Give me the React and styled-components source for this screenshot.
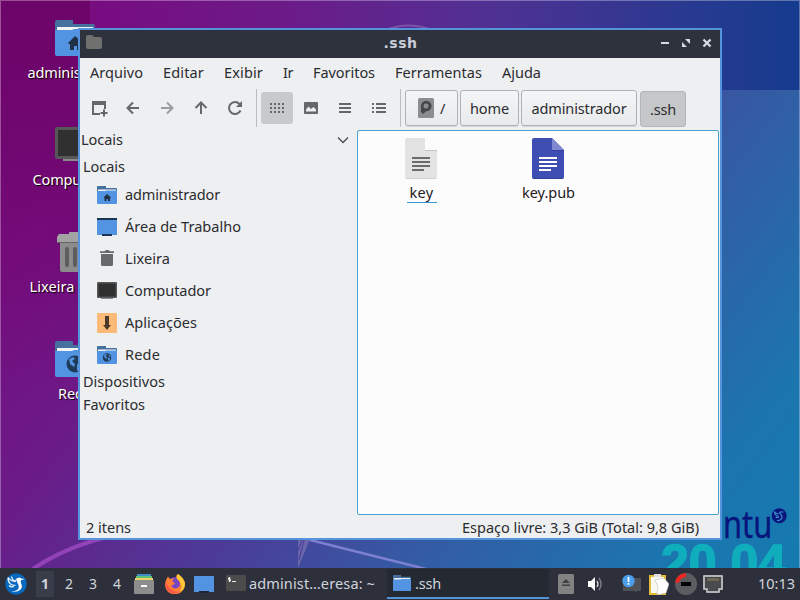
import React, { useLayoutEffect, useRef } from "react";
import styled, { createGlobalStyle, css } from "styled-components";

const Global = createGlobalStyle`
  * { box-sizing: border-box; }
  body { margin: 0; overflow: hidden; }
`;

const Screen = styled.div`
  position: relative;
  width: 800px;
  height: 600px;
  overflow: hidden;
  display: flex;
  flex-direction: column;
  justify-content: flex-end;
  font-family: "Noto Sans", "Open Sans", sans-serif;
  font-size: 14.5px;
  line-height: 20px;
  color: #2b2c2f;
  background: linear-gradient(127deg, #740874 0%, #740f80 17%, #6b1b88 31%, #4b3c98 51%, #355aa3 66%, #1c75ae 86%, #147bb0 100%);
`;

const Wallpaper = styled.svg`
  position: absolute;
  inset: 0;
`;

const Brand = styled.div`
  position: absolute;
  left: 723px;
  top: 498px;
  font-size: 39px;
  line-height: 50px;
  color: #07157c;
  -webkit-text-stroke: 0.4px #07157c;
  transform: scaleX(0.79);
  transform-origin: 0 0;
`;

const Version = styled.div`
  position: absolute;
  left: 661px;
  top: 535px;
  font: bold 50px/56px "Liberation Sans", sans-serif;
  color: #10aebd;
  -webkit-text-stroke: 1.5px #10aebd;
`;

const LabelBox = styled.span`
  display: block;
  flex: none;
  width: ${(p) => p.$w}px;
  white-space: pre;
`;

/* A text run tracked so that it fills the given width. */
function Label({ w, children }) {
  const ref = useRef(null);
  useLayoutEffect(() => {
    const el = ref.current;
    el.style.letterSpacing = "0px";
    const natural = el.getBoundingClientRect().width;
    el.style.letterSpacing = `${(w - natural) / el.textContent.length}px`;
  }, [w, children]);
  return (
    <LabelBox $w={w}>
      <span ref={ref}>{children}</span>
    </LabelBox>
  );
}

const Icon = styled.svg`
  display: block;
  flex: none;
  width: ${(p) => p.$w || 20}px;
  height: ${(p) => p.$h || p.$w || 20}px;
`;

/* Desktop */
const DesktopIcons = styled.div`
  position: absolute;
  left: 25px;
  top: 18px;
  width: 100px;
  display: grid;
  grid-auto-rows: 107px;
`;
const DesktopItem = styled.div`
  display: flex;
  flex-direction: column;
  align-items: center;
  gap: 4px;
  color: #fff;
  text-shadow: 1px 1px 1px #000;
`;
const DesktopName = styled.div`
  width: ${(p) => p.$w}px;
`;

/* Window */
const Window = styled.section`
  position: absolute;
  left: 78px;
  top: 28px;
  width: 644px;
  height: 512px;
  border: 2px solid #5593dd;
  background: #eeeff1;
  display: flex;
  flex-direction: column;
`;
const TitleBar = styled.header`
  height: 28px;
  background: #2e323d;
  display: grid;
  grid-template-columns: 80px 1fr 80px;
  align-items: center;
  padding: 0 7px 2px 5px;
`;
const Title = styled.h1`
  margin: 0;
  padding-left: 3px;
  display: flex;
  justify-content: center;
  font: bold 14px/20px "DejaVu Sans", sans-serif;
  color: #c8cdd8;
`;
const WindowButtons = styled.div`
  display: flex;
  justify-content: flex-end;
  gap: 9px;
`;
const MenuBar = styled.nav`
  height: 30px;
  display: flex;
  align-items: center;
  gap: 20px;
  padding: 0 0 2px 10px;
`;
const ToolBar = styled.div`
  height: 42px;
  display: flex;
  align-items: flex-start;
  padding: 1px 0 0 3px;
`;
const ToolGroup = styled.div`
  display: flex;
  gap: 2px;
  padding-top: 3px;
`;
const ToolButton = styled.button`
  width: 32px;
  height: 32px;
  padding: 0;
  border: 0;
  border-radius: 3px;
  display: grid;
  place-items: center;
  color: #66676b;
  background: ${(p) => (p.$active ? "#c8c9cb" : "transparent")};
  opacity: ${(p) => (p.$dim ? 0.6 : 1)};
`;
const Separator = styled.div`
  width: 1px;
  height: 38px;
  background: #bcbdc0;
  margin: 0 4px 0 5px;
`;
const PathButton = styled.button`
  height: 36px;
  width: ${(p) => p.$w}px;
  margin: 1px 2px 0 0;
  padding: 0;
  font: inherit;
  color: inherit;
  border: 1px solid #b0b1b4;
  border-radius: 3px;
  display: flex;
  align-items: center;
  justify-content: center;
  gap: 6px;
  background: linear-gradient(#f4f5f6, #e9eaec);
  box-shadow: 0 1px 0 #d4d5d7;
  ${(p) =>
    p.$active &&
    css`
      margin: 2px 0 0 1px;
      background: #c6c7c9;
      border-color: #b4b5b8;
      box-shadow: none;
    `}
`;
const Main = styled.div`
  height: 385px;
  display: grid;
  grid-template-columns: 277px 362px;
`;
const SidePane = styled.aside`
  display: flex;
  flex-direction: column;
`;
const PaneHeader = styled.div`
  height: 21px;
  display: flex;
  align-items: center;
  justify-content: space-between;
  padding: 0 8px 2px 1px;
  ${LabelBox} {
    margin-bottom: 1px;
  }
`;
const TreeHeading = styled.div`
  height: ${(p) => (p.$first ? 28 : 23)}px;
  display: flex;
  align-items: center;
  padding: ${(p) => (p.$first ? 2 : 0)}px 0 ${(p) => (p.$first ? 0 : 3)}px 3px;
`;
const Place = styled.div`
  height: 32px;
  display: flex;
  align-items: center;
  gap: 8px;
  padding-left: 17px;
  ${LabelBox} {
    margin-bottom: 2px;
  }
`;
const FileView = styled.div`
  border: 1px solid #4aa3cf;
  border-radius: 2px;
  background: #fcfcfc;
  display: flex;
  padding-top: 7px;
`;
const File = styled.div`
  width: 127px;
  padding-right: 2px;
  display: flex;
  flex-direction: column;
  align-items: center;
  gap: 3px;
  color: #1f2022;
`;
const FileName = styled.div`
  margin-left: 2px;
  padding: 0 3px;
  height: 21px;
  border-bottom: 1px solid ${(p) => (p.$current ? "#359bcf" : "transparent")};
`;
const StatusBar = styled.footer`
  height: 22px;
  display: flex;
  align-items: center;
  justify-content: space-between;
  padding: 1px 21px 0 6px;
`;

/* Panel */
const Panel = styled.footer`
  position: relative;
  height: 32px;
  background: #2d303b;
  color: #d0d4dd;
  display: flex;
  align-items: center;
  padding: 0 5px;
`;
const Workspaces = styled.div`
  display: flex;
  gap: 6px;
  margin: 0 8px 0 9px;
`;
const Workspace = styled.div`
  width: 18px;
  height: 26px;
  display: grid;
  place-items: center;
  font-size: 14px;
  font-weight: ${(p) => (p.$active ? 700 : 400)};
  background: ${(p) => (p.$active ? "#393d4a" : "transparent")};
`;
const Launchers = styled.div`
  display: grid;
  grid-template-columns: 31px 29px 20px;
  margin-right: 12px;
`;
const Task = styled.div`
  width: ${(p) => p.$w}px;
  height: 30px;
  display: flex;
  align-items: center;
  gap: ${(p) => (p.$active ? 4 : 3)}px;
  padding: 0 0 0 ${(p) => (p.$active ? 6 : 0)}px;
  background: ${(p) => (p.$active ? "#252932" : "transparent")};
  border-bottom: 2px solid ${(p) => (p.$active ? "#5593dd" : "transparent")};
`;
const Tray = styled.div`
  flex: 1;
  display: grid;
  grid-template-columns: 28px 36px 27px 26px 28px 1fr;
  align-items: center;
  padding-left: 9px;
`;
const Clock = styled.div`
  padding-bottom: 2px;
`;

function FolderIcon({ size, kind }) {
  return (
    <Icon $w={size} viewBox="0 0 40 40">
      <path d="M0 4a2 2 0 0 1 2-2h16v4h20a2 2 0 0 1 2 2v10H0z" fill="#46719f" />
      <path d="M2 9h36v5H2z" fill="#f4f4f2" />
      <path d="M0 12h17l2-1h21v25a2 2 0 0 1-2 2H2a2 2 0 0 1-2-2z" fill="#5294e2" />
      {kind === "home" && <path d="m20 18 8 7-1 1h-1v6h-4v-4h-3v4h-4v-6h-1l-1-1z" fill="#1f3245" />}
      {kind === "net" && (
        <g>
          <circle cx="20" cy="25" r="8.5" fill="#1f3b57" />
          <path d="m14 20 4-2 2 2-3 2 3 3-1 3-4-3zM23 19l4 4-2 1-2-2zM22 25l4 1-1 4-3 2z" fill="#5294e2" />
        </g>
      )}
    </Icon>
  );
}
function MonitorIcon({ size }) {
  return (
    <Icon $w={size} viewBox="0 0 40 40">
      <path d="M8 32h24v4H8z" fill="#8b8b8b" />
      <rect y="2" width="40" height="32" rx="2" fill="#555759" />
      <rect x="3" y="5" width="34" height="26" fill="#303030" />
    </Icon>
  );
}
function BigTrash() {
  return (
    <Icon $w={40} viewBox="0 0 40 40">
      <path d="M5 9h30v29a2 2 0 0 1-2 2H7a2 2 0 0 1-2-2z" fill="#8c8c8c" />
      <path d="M14 0h12v2h10l2 3v5H2V5l2-3h10z" fill="#a3a3a3" />
      <path d="M2 10h36v1H2z" fill="#666" />
      <g fill="#5d5d5d">
        <rect x="10" y="15" width="4" height="20" rx="2" />
        <rect x="18" y="15" width="4" height="20" rx="2" />
        <rect x="26" y="15" width="4" height="20" rx="2" />
      </g>
    </Icon>
  );
}
function SmallTrash() {
  return (
    <Icon viewBox="0 0 20 20">
      <path d="M3 2.200h4.500L9 1h2.500L13 2.200h4V4H3zM4 5h12v10.500a1.500 1.500 0 0 1-1.500 1.500h-9A1.500 1.500 0 0 1 4 15.500z" fill="#68696c" />
    </Icon>
  );
}
function DesktopIcon() {
  return (
    <Icon viewBox="0 0 20 20">
      <path d="M0 2h20v16H0z" fill="#5294e2" />
      <path d="M0 1h20v2H0zM5 17h10v2H5z" fill="#1c3554" />
    </Icon>
  );
}
function AppsIcon() {
  return (
    <Icon viewBox="0 0 20 20">
      <rect width="20" height="20" rx="1" fill="#fbba78" />
      <path d="M8 3h4v9h2l-4 5-4-5h2z" fill="#4b3a2b" />
    </Icon>
  );
}
function FileIcon({ plain }) {
  return (
    <Icon $w={32} $h={41} viewBox="0 0 32 41">
      <path d="M2 0h18l12 12v27a2 2 0 0 1-2 2H2a2 2 0 0 1-2-2V2a2 2 0 0 1 2-2z" fill={plain ? "#fbfbfb" : "#3f4eb3"} />
      {plain ? (
        <path d="M2 0h18v12h12v27a2 2 0 0 1-2 2H2a2 2 0 0 1-2-2V2a2 2 0 0 1 2-2z" fill="#e3e3e3" />
      ) : (
        <path d="M20 0l12 12H20z" fill="#8088cf" />
      )}
      <path d="M20 12h12v1H20z" fill={plain ? "#c4c4c4" : "#3540a0"} />
      <path d="M0 40h32l-2 1H2z" fill={plain ? "#cfcfcf" : "#35419b"} />
      <path d="M7 19h18v2H7zM7 23h18v2H7zM7 27h18v2H7zM7 31h12v2H7z" fill={plain ? "#6b6b6b" : "#fff"} />
    </Icon>
  );
}
const stroke = { fill: "none", stroke: "currentColor", strokeWidth: 2 };

function NavIcon({ name }) {
  const art = {
    newTab: <path d="M3 3h14v8h-2V7H5v8h6v2H3zM14 11.500h2V14h2.500v2H16v2.500h-2V16h-2.500v-2H14z" fill="currentColor" />,
    back: <path d="M16 10H5M10 4.500 4.500 10l5.500 5.500" {...stroke} />,
    forward: <path d="M4 10h11M10 4.500l5.500 5.500-5.500 5.500" {...stroke} />,
    up: <path d="M10 16V5M4.500 10 10 4.500l5.500 5.500" {...stroke} />,
    reload: (
      <g>
        <path d="M15.500 12.500A6 6 0 1 1 14.500 6" {...stroke} />
        <path d="M17 3v6h-6z" fill="currentColor" />
      </g>
    ),
    icons: <path d="M3 6h15M3 10h15M3 14h15" fill="none" stroke="currentColor" strokeWidth="2" strokeDasharray="2 2" />,
    thumbs: <path fillRule="evenodd" d="M4 4h12a1 1 0 0 1 1 1v10a1 1 0 0 1-1 1H4a1 1 0 0 1-1-1V5a1 1 0 0 1 1-1zM5 13.500h10v-2L12.500 9 10 11 7.500 8.500 5 11.500z" fill="currentColor" />,
    compact: <path d="M4 6h12M4 10h12M4 14h12" {...stroke} />,
    detail: <path d="M3 6h2M7 6h10M3 10h2M7 10h10M3 14h2M7 14h10" {...stroke} />,
  };
  return <Icon viewBox="0 0 20 20">{art[name]}</Icon>;
}

function DiskIcon() {
  return (
    <Icon $w={16} $h={20} viewBox="0 0 16 20">
      <rect width="16" height="20" rx="1.500" fill="#8c8d8f" />
      <path d="M3 14V8a5.300 5.300 0 1 1 5.300 5.300L5 16z" fill="#45474a" />
      <circle cx="8" cy="8" r="2.500" fill="#8c8d8f" />
    </Icon>
  );
}

function BirdLogo() {
  return (
    <g>
      <circle cx="11" cy="11" r="10.700" fill="#0868bd" />
      <path d="M3 4.500q0 4.500 2.500 6.500 3 2 5 1M3 4.500q2.500 3.500 6.500 4M6.500 3.500q.5 3.500 3.500 5M10 9q1.500-4.500 6-3.500M4 12.500q2 2 5 1" fill="none" stroke="#eef6fc" strokeWidth="1.200" />
      <path d="M12 5.500q2-1.500 4 0l4 .6-3.500 1q-1.500.9-.5 2.900 2 4-.5 6.500-3 3-9 2 5.500-.5 7-3 1-2.500-.8-5-1.700-3-.7-5z" fill="#fff" />
    </g>
  );
}
function CabinetIcon() {
  return (
    <Icon viewBox="0 0 20 20">
      <path d="M3 0h14v2H3z" fill="#3d8ec9" />
      <path d="M2 2h16v2H2z" fill="#65bf72" />
      <path d="M1 4h18v3H1z" fill="#eed267" />
      <rect y="6" width="20" height="14" rx="1" fill="#8d8d8d" />
      <path d="M7 11h6v2H7z" fill="#fff" />
    </Icon>
  );
}
function FirefoxIcon() {
  return (
    <Icon viewBox="0 0 20 20">
      <circle cx="10" cy="10.500" r="7.500" fill="#7548c0" />
      <path d="M1.500 5 3 2.500 5 5l4-.5-2 3 3 1.500q-2 3-4 2 1.500 4 5 3.500 4-1 4-5Q15 7 12 5q-2-3 1-5 6 4 7 9 0 9-8 11Q4 21 1 15q-2-5 .5-10z" fill="#ff7f37" />
      <path d="M12 4.500Q11 2 13 0q7 5 7 11-1 6-6 7 4-4 2-8-1-3-4-5.500z" fill="#ffca35" />
      <path d="M1 8Q-1 14 4 18q6 4 12-1-5 2-9-1T1 8z" fill="#fa5a48" />
    </Icon>
  );
}
function ShowDesktopIcon() {
  return (
    <Icon viewBox="0 0 20 20">
      <path d="M0 2h20v16h-5v-1H5v1H0z" fill="#5294e2" />
      <path d="M5 17h10v2H5z" fill="#1c2638" />
    </Icon>
  );
}
function TerminalIcon() {
  return (
    <Icon viewBox="0 0 20 20">
      <rect y="2" width="20" height="16" rx="1" fill="#4b4b4b" />
      <path d="M4.500 5H2.500v1.500h2V8h-2M3.500 4v5M6 8.500h4" fill="none" stroke="#e9e9e9" />
    </Icon>
  );
}
function EjectIcon() {
  return (
    <Icon $w={16} $h={20} viewBox="0 0 16 20">
      <rect width="16" height="20" rx="1.500" fill="#828282" />
      <path d="m8 5 4 4H4zM4 10.500h8V12H4z" fill="#414141" />
    </Icon>
  );
}
function VolumeIcon() {
  return (
    <Icon $w={18} $h={18} viewBox="0 0 18 18">
      <path d="M2 6h3l4-4v14l-4-4H2z" fill="#fff" />
      <path d="M11 6q2 3 0 6" fill="none" stroke="#e0e1e4" strokeWidth="1.300" />
      <path d="M13 3q4 6 0 12" fill="none" stroke="#797c83" strokeWidth="1.500" />
    </Icon>
  );
}
function NoticeIcon() {
  return (
    <Icon $w={20} viewBox="0 0 20 20">
      <path d="M1 4h18v13h-4l-2 2v-2H1z" fill="#505157" />
      <circle cx="6.500" cy="7" r="6.200" fill="#4a9fea" />
      <path d="M5.600 3h1.800v5H5.600zM5.600 9h1.800v1.800H5.600z" fill="#fff" />
    </Icon>
  );
}
function ClipboardIcon() {
  return (
    <Icon $w={20} $h={21} viewBox="0 0 20 21">
      <rect y="1" width="17" height="20" fill="#e3bb36" />
      <path d="M2 3h13v16H2z" fill="#f8f8f1" />
      <path d="M5 0h7v3H5z" fill="#dedede" />
      <path d="m6 6 9-2 5 6-3 9-9 2 1-8z" fill="#fff" stroke="#bdbcac" strokeWidth=".6" />
    </Icon>
  );
}
function GaugeIcon() {
  return (
    <Icon $w={22} viewBox="0 0 22 22">
      <circle cx="11" cy="11" r="11" fill="#5c5d61" />
      <path d="M0 10A11 11 0 0 1 11 0v6l-5 3z" fill="#e9261f" />
      <circle cx="11" cy="11" r="7" fill="#595a5e" />
      <path d="M6 9h10v4H6z" fill="#000" />
    </Icon>
  );
}
function EthernetIcon() {
  return (
    <Icon $w={20} $h={18} viewBox="0 0 20 18">
      <path d="M1 1h18v13h-3v3H4v-3H1z" fill="#45464a" stroke="#b4b4b4" strokeWidth="2" strokeLinejoin="round" />
      <path d="M3 4h14v8h-3v3H6v-3H3z" fill="#4a4b4d" />
      <path d="M5 3v3M7 3v3M9 3v3M11 3v3M13 3v3M15 3v3" stroke="#a69663" strokeWidth=".8" />
    </Icon>
  );
}

const desktop = [
  { icon: <FolderIcon size={40} kind="home" />, name: "administrador", w: 95 },
  { icon: <MonitorIcon size={40} />, name: "Computador", w: 85 },
  { icon: <BigTrash />, name: "Lixeira", w: 45, box: 91 },
  { icon: <FolderIcon size={40} kind="net" />, name: "Rede", w: 34 },
];
const menus = [["Arquivo", 53], ["Editar", 41], ["Exibir", 39], ["Ir", 10], ["Favoritos", 62], ["Ferramentas", 87], ["Ajuda", 39]];
const places = [
  [<FolderIcon size={20} kind="home" />, "administrador", 95],
  [<DesktopIcon />, "Área de Trabalho", 116],
  [<SmallTrash />, "Lixeira", 45],
  [<MonitorIcon size={20} />, "Computador", 86],
  [<AppsIcon />, "Aplicações", 72],
  [<FolderIcon size={20} kind="net" />, "Rede", 35],
];

export default function App() {
  return (
    <Screen>
      <Global />
      <Wallpaper width="800" height="600" viewBox="0 0 800 600">
        <defs>
          <linearGradient id="top">
            <stop offset="0" stopColor="#780c80" />
            <stop offset=".28" stopColor="#6c1b89" />
            <stop offset=".55" stopColor="#513093" />
            <stop offset=".86" stopColor="#263a90" />
            <stop offset="1" stopColor="#153b8e" />
          </linearGradient>
          <linearGradient id="corner" x2="0" y2="1">
            <stop offset="0" stopColor="#6d0569" />
            <stop offset=".3" stopColor="#70066f" />
            <stop offset="1" stopColor="#740a78" stopOpacity="0" />
          </linearGradient>
        </defs>
        <path d="M90 0h710v90H90z" fill="url(#top)" />
        <path d="M0 0h90v400H0z" fill="url(#corner)" />
        <path d="M33 569q29-20 70-31" fill="none" stroke="#a84fc9" strokeWidth="4" opacity=".7" />
        <path d="M298 539v29l12-29z" fill="#8579b4" opacity=".6" />
        <path d="m299 560 5-20M298 551l4-11" stroke="#4a3b98" />
        <path d="m310 540 120 30" stroke="#7d7fd0" strokeWidth="2.500" />
        <path d="M386 30q22-9 46 0" fill="none" stroke="#8b68b5" strokeWidth="2" opacity=".7" />
        <path d="M0 .5h800M.5 0v568M799.500 0v568" stroke="#fff" opacity=".3" />
        <g transform="translate(771.500 508) scale(.7)">
          <circle cx="11" cy="11" r="10.700" fill="#07157c" />
          <path d="M4 5q1 6 6 7M4 5q3 4 6 3M6 13q3 1 5 0M11 8q2-4 6-2M12 8q5 4 2 8-2 2-6 2" fill="none" stroke="#3f93cf" strokeWidth="1.600" />
        </g>
      </Wallpaper>
      <Brand>ntu</Brand>
      <Version>20.04</Version>

      <DesktopIcons>
        {desktop.map(({ icon, name, w, box }) => (
          <DesktopItem key={name}>
            {icon}
            <DesktopName $w={box || w}><Label w={w}>{name}</Label></DesktopName>
          </DesktopItem>
        ))}
      </DesktopIcons>

      <Window>
        <TitleBar>
          <Icon $w={18} viewBox="0 0 18 18">
            <path d="M1 3a2 2 0 0 1 2-2h4l2 2h6a2 2 0 0 1 2 2v8a2 2 0 0 1-2 2H3a2 2 0 0 1-2-2z" fill="#70706f" />
          </Icon>
          <Title><Label w={34}>.ssh</Label></Title>
          <WindowButtons>
            <Icon $w={12} viewBox="0 0 12 12"><path d="M2 6h8" stroke="#d5dae6" strokeWidth="2" /></Icon>
            <Icon $w={12} viewBox="0 0 12 12"><path d="M5 2h5v5zM2 5v5h5z" fill="#d5dae6" /></Icon>
            <Icon $w={12} viewBox="0 0 12 12"><path d="m2.500 2.500 7 7m0-7-7 7" stroke="#d5dae6" strokeWidth="2.300" /></Icon>
          </WindowButtons>
        </TitleBar>
        <MenuBar>
          {menus.map(([name, w]) => <Label key={name} w={w}>{name}</Label>)}
        </MenuBar>
        <ToolBar>
          <ToolGroup>
            {["newTab", "back", "forward", "up", "reload"].map((n) => (
              <ToolButton key={n} $dim={n === "forward"}><NavIcon name={n} /></ToolButton>
            ))}
          </ToolGroup>
          <Separator />
          <ToolGroup>
            {["icons", "thumbs", "compact", "detail"].map((n) => (
              <ToolButton key={n} $active={n === "icons"}><NavIcon name={n} /></ToolButton>
            ))}
          </ToolGroup>
          <Separator />
          <PathButton $w={53}><DiskIcon /><Label w={5}>/</Label></PathButton>
          <PathButton $w={59}><Label w={39}>home</Label></PathButton>
          <PathButton $w={116}><Label w={95}>administrador</Label></PathButton>
          <PathButton $w={46} $active><Label w={26}>.ssh</Label></PathButton>
        </ToolBar>
        <Main>
          <SidePane>
            <PaneHeader>
              <Label w={42}>Locais</Label>
              <Icon $w={12} viewBox="0 0 12 12"><path d="m1 3.500 5 5 5-5" fill="none" stroke="#4c4d50" strokeWidth="1.300" /></Icon>
            </PaneHeader>
            <TreeHeading $first><Label w={42}>Locais</Label></TreeHeading>
            {places.map(([icon, name, w]) => (
              <Place key={name}>{icon}<Label w={w}>{name}</Label></Place>
            ))}
            <TreeHeading><Label w={82}>Dispositivos</Label></TreeHeading>
            <TreeHeading><Label w={62}>Favoritos</Label></TreeHeading>
          </SidePane>
          <FileView>
            <File><FileIcon plain /><FileName $current><Label w={24}>key</Label></FileName></File>
            <File><FileIcon /><FileName><Label w={53}>key.pub</Label></FileName></File>
          </FileView>
        </Main>
        <StatusBar>
          <Label w={45}>2 itens</Label>
          <Label w={237}>Espaço livre: 3,3 GiB (Total: 9,8 GiB)</Label>
        </StatusBar>
      </Window>

      <Panel>
        <Icon $w={22} viewBox="0 0 22 22"><BirdLogo /></Icon>
        <Workspaces>
          {[1, 2, 3, 4].map((n) => <Workspace key={n} $active={n === 1}>{n}</Workspace>)}
        </Workspaces>
        <Launchers><CabinetIcon /><FirefoxIcon /><ShowDesktopIcon /></Launchers>
        <Task $w={161}><TerminalIcon /><Label w={126}>administ…eresa: ~</Label></Task>
        <Task $w={162} $active><FolderIcon size={18} /><Label w={26}>.ssh</Label></Task>
        <Tray>
          <EjectIcon /><VolumeIcon /><NoticeIcon /><ClipboardIcon /><GaugeIcon /><EthernetIcon />
        </Tray>
        <Clock><Label w={37}>10:13</Label></Clock>
      </Panel>
    </Screen>
  );
}
